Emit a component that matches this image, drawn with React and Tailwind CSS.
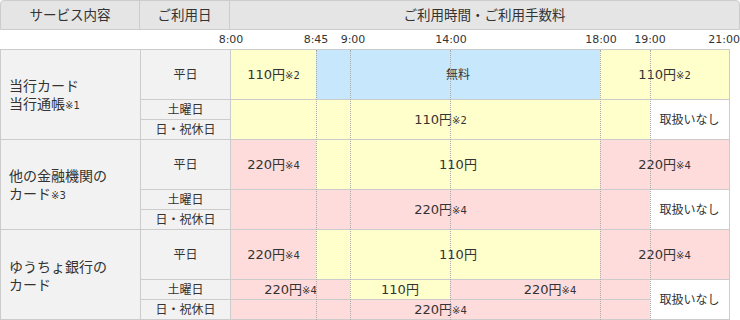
const FONT = "font-['DejaVu_Sans','Noto_Sans_CJK_JP',sans-serif]"

const YELLOW = 'bg-[#ffffcc]'
const BLUE = 'bg-[#c7e8fc]'
const PINK = 'bg-[#ffdcdc]'
const WHITE = 'bg-white'

function Fee({ v, n }) {
  return (
    <span className="text-[13px]">
      {v}円{n && <span className="text-[10px]">※{n}</span>}
    </span>
  )
}

function Cell({ className, children }) {
  return (
    <div className={`flex items-center justify-center border-b border-[#ccc] ${className}`}>{children}</div>
  )
}

function Day({ className, children }) {
  return (
    <div className={`col-start-2 flex items-center justify-center border-b border-r border-[#ccc] bg-[#f2f2f2] text-[12px] ${className}`}>
      {children}
    </div>
  )
}

function Service({ className, children }) {
  return (
    <div className={`col-start-1 row-span-3 flex items-center border-b border-r border-[#ccc] bg-[#f2f2f2] pl-2 pt-0.5 text-[14px] leading-[18px] ${className}`}>
      <div>{children}</div>
    </div>
  )
}

const ticks = [
  { t: '8:00', x: 'left-[231px]' },
  { t: '8:45', x: 'left-[316px]' },
  { t: '9:00', x: 'left-[353px]' },
  { t: '14:00', x: 'left-[451px]' },
  { t: '18:00', x: 'left-[601px]' },
  { t: '19:00', x: 'left-[650px]' },
]

const dots = ['left-[315px]', 'left-[349px]', 'left-[449px]', 'left-[599px]', 'left-[649px]']

export default function App() {
  return (
    <div className={`w-[740px] h-[320px] bg-white text-[#333] ${FONT}`}>
      {/* header */}
      <div className="flex h-[30px] rounded-t-[4px] border border-[#ccc] bg-[#e5e5e5] text-[13.5px]">
        <div className="flex w-[139px] items-center justify-center border-r border-[#ccc]">サービス内容</div>
        <div className="flex w-[90px] items-center justify-center border-r border-[#ccc]">ご利用日</div>
        <div className="flex flex-1 items-center justify-center">ご利用時間・ご利用手数料</div>
      </div>

      {/* time axis */}
      <div className="relative h-[19px] text-[11px] leading-[19px]">
        {ticks.map((k) => (
          <span key={k.t} className={`absolute top-0 -translate-x-1/2 ${k.x}`}>{k.t}</span>
        ))}
        <span className="absolute top-0 right-0">21:00</span>
      </div>

      {/* body */}
      <div className="relative grid w-[730px] grid-cols-[140px_90px_85px_34px_100px_150px_50px_79px] grid-rows-[50px_20px_20px_50px_20px_20px_50px_20px_20px] border-l border-r border-t border-[#ccc]">
        {/* 当行カード */}
        <Service className="row-start-1">
          当行カード<br />当行通帳<span className="text-[10px]">※1</span>
        </Service>
        <Day className="row-start-1">平日</Day>
        <Day className="row-start-2">土曜日</Day>
        <Day className="row-start-3">日・祝休日</Day>
        <Cell className={`col-start-3 row-start-1 ${YELLOW}`}><Fee v="110" n="2" /></Cell>
        <Cell className={`col-start-4 col-span-3 row-start-1 text-[12px] ${BLUE}`}>無料</Cell>
        <Cell className={`col-start-7 col-span-2 row-start-1 ${YELLOW}`}><Fee v="110" n="2" /></Cell>
        <Cell className={`col-start-3 col-span-5 row-start-2 row-span-2 ${YELLOW}`}><Fee v="110" n="2" /></Cell>
        <Cell className={`col-start-8 row-start-2 row-span-2 text-[12px] ${WHITE}`}>取扱いなし</Cell>

        {/* 他の金融機関 */}
        <Service className="row-start-4">
          他の金融機関の<br />カード<span className="text-[10px]">※3</span>
        </Service>
        <Day className="row-start-4">平日</Day>
        <Day className="row-start-5">土曜日</Day>
        <Day className="row-start-6">日・祝休日</Day>
        <Cell className={`col-start-3 row-start-4 ${PINK}`}><Fee v="220" n="4" /></Cell>
        <Cell className={`col-start-4 col-span-3 row-start-4 ${YELLOW}`}><Fee v="110" /></Cell>
        <Cell className={`col-start-7 col-span-2 row-start-4 ${PINK}`}><Fee v="220" n="4" /></Cell>
        <Cell className={`col-start-3 col-span-5 row-start-5 row-span-2 ${PINK}`}><Fee v="220" n="4" /></Cell>
        <Cell className={`col-start-8 row-start-5 row-span-2 text-[12px] ${WHITE}`}>取扱いなし</Cell>

        {/* ゆうちょ銀行 */}
        <Service className="row-start-7">
          ゆうちょ銀行の<br />カード
        </Service>
        <Day className="row-start-7">平日</Day>
        <Day className="row-start-8">土曜日</Day>
        <Day className="row-start-9">日・祝休日</Day>
        <Cell className={`col-start-3 row-start-7 ${PINK}`}><Fee v="220" n="4" /></Cell>
        <Cell className={`col-start-4 col-span-3 row-start-7 ${YELLOW}`}><Fee v="110" /></Cell>
        <Cell className={`col-start-7 col-span-2 row-start-7 ${PINK}`}><Fee v="220" n="4" /></Cell>
        <Cell className={`col-start-3 col-span-2 row-start-8 ${PINK}`}><Fee v="220" n="4" /></Cell>
        <Cell className={`col-start-5 row-start-8 ${YELLOW}`}><Fee v="110" /></Cell>
        <Cell className={`col-start-6 col-span-2 row-start-8 ${PINK}`}><Fee v="220" n="4" /></Cell>
        <Cell className={`col-start-3 col-span-5 row-start-9 ${PINK}`}><Fee v="220" n="4" /></Cell>
        <Cell className={`col-start-8 row-start-8 row-span-2 text-[12px] ${WHITE}`}>取扱いなし</Cell>

        {/* time guides */}
        {dots.map((d) => (
          <div key={d} className={`pointer-events-none absolute top-0 bottom-0 w-0 border-l border-dotted border-[#aaa] ${d}`} />
        ))}
      </div>
    </div>
  )
}
